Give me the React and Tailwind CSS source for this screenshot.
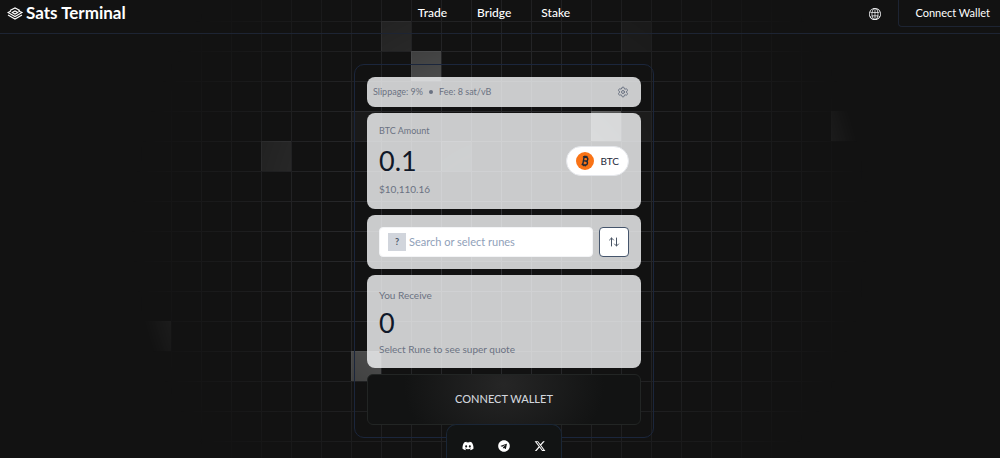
import { Settings, ArrowUpDown } from "lucide-react";
import { FaDiscord, FaTelegram } from "react-icons/fa";
import { FaXTwitter } from "react-icons/fa6";
import { SlGlobe } from "react-icons/sl";

const squares = [
  [-4, -7, 0.24],
  [-3, -6, 0.5],
  [4, -7, 0.13],
  [-5, -4, 0.08],
  [3, -4, 0.6],
  [4, -4, 0.1],
  [11, -4, 0.65],
  [-8, -3, 0.26],
  [-2, -3, 0.14],
  [-1, 0, 0.08],
  [-12, 3, 0.65],
  [-5, 4, 0.55],
];

function Backdrop() {
  return (
    <svg
      aria-hidden="true"
      className="pointer-events-none absolute inset-0 -z-10 h-full w-full [mask-image:radial-gradient(370px_circle_at_center,white,transparent)]"
    >
      <svg x="50%" y="0" overflow="visible">
        <defs>
          <pattern id="grid" width="30" height="30" patternUnits="userSpaceOnUse" x="1" y="21">
            <path d="M0.5 30V0.5H30" fill="none" stroke="#9ca3af" strokeOpacity="0.26" />
          </pattern>
        </defs>
        <rect x="-500" y="0" width="1000" height="2000" fill="url(#grid)" />
        {squares.map(([col, row, opacity]) => (
          <rect
            key={`${col},${row}`}
            x={col * 30 + 1}
            y={row * 30 + 231}
            width="30"
            height="30"
            fill="#d8dada"
            fillOpacity={opacity}
          />
        ))}
      </svg>
    </svg>
  );
}

function LogoMark() {
  return (
    <svg viewBox="0 0 32 26" className="h-[13px] w-4" fill="none" stroke="currentColor" strokeWidth="2.2" aria-hidden="true">
      <path d="M6 7 L16 1.8 L26 7" />
      <path d="M22 7.5 L30 11 L16 19 L2 11 L8 8" />
      <path d="M10.5 11 L16 7.8 L21.5 11 L16 14.2 Z" />
      <path d="M2 16 L16 24 L30 16" />
    </svg>
  );
}

function Header() {
  return (
    <header className="grid h-[34px] grid-cols-[1fr_auto_1fr] items-start border-b border-[#1d2433]">
      <a href="#" className="flex h-[26px] items-center gap-[3px] pl-[7px] text-[17px] font-bold text-white">
        <LogoMark />
        Sats Terminal
      </a>
      <nav className="flex h-[26px] items-center gap-[30px] pr-3 text-xs font-medium text-white">
        <a href="#">Trade</a>
        <a href="#">Bridge</a>
        <a href="#">Stake</a>
      </nav>
      <div className="flex items-center justify-end gap-[17px]">
        <button type="button" aria-label="Language" className="text-gray-100">
          <SlGlobe className="size-3" />
        </button>
        <button
          type="button"
          className="h-[27px] rounded-bl border-b border-l border-[#1d2433] pr-2.5 pl-4 text-[11px] text-white"
        >
          Connect Wallet
        </button>
      </div>
    </header>
  );
}

const panel = "rounded-lg bg-gray-50/80 px-3";

function TradeCard() {
  return (
    <main className="flex w-[300px] flex-col gap-1.5 rounded-[10px] border border-[#1b263c] p-3">
      <section className={`${panel} flex h-[30px] items-center justify-between pl-1.5! text-[9px] text-gray-500`}>
        <p className="flex items-center gap-1.5">
          <span>Slippage: 9%</span>
          <span className="size-1 rounded-full bg-gray-500" />
          <span>Fee: 8 sat/vB</span>
        </p>
        <button type="button" aria-label="Settings">
          <Settings className="size-3" />
        </button>
      </section>

      <section className={`${panel} flex h-24 items-center justify-between`}>
        <div className="flex flex-col">
          <label htmlFor="amount" className="text-[9px] leading-3 text-gray-500">
            BTC Amount
          </label>
          <input
            id="amount"
            defaultValue="0.1"
            className="mt-1.5 h-9 w-32 bg-transparent text-[27px] leading-9 text-gray-900 outline-none"
          />
          <p className="mt-0.5 text-[10px] leading-4 text-gray-500">$10,110.16</p>
        </div>
        <button
          type="button"
          className="flex h-[30px] items-center gap-1.5 rounded-full border border-gray-200 bg-white px-[9px] text-[10px] text-gray-800"
        >
          <svg viewBox="0 0 18 18" className="size-[18px]" aria-hidden="true">
            <circle cx="9" cy="9" r="9" fill="#f97316" />
            <g transform="rotate(10 9 9)" fill="none" stroke="#1f2937" strokeWidth="1.4">
              <path d="M6.2 5.2H9.6a1.8 1.8 0 0 1 0 3.7H7.4M9.8 8.9a2 2 0 0 1 0 4H6.2M7.4 5.2V12.9M8.2 3.6V5.2M10 3.6V5.2M8.2 12.9V14.4M10 12.9V14.4" />
            </g>
          </svg>
          BTC
        </button>
      </section>

      <section className={`${panel} flex h-[54px] items-center gap-1.5`}>
        <label className="flex h-[30px] min-w-0 flex-1 items-center gap-[3px] rounded border border-gray-100 bg-white px-2">
          <span className="flex size-[18px] shrink-0 items-center justify-center bg-gray-300 text-[9px] font-bold text-gray-600">
            ?
          </span>
          <input
            aria-label="Search or select runes"
            placeholder="Search or select runes"
            className="w-full min-w-0 bg-transparent text-[11px] outline-none placeholder:text-slate-400"
          />
        </label>
        <button
          type="button"
          aria-label="Swap direction"
          className="flex size-[30px] items-center justify-center rounded border border-slate-600 bg-white text-gray-600"
        >
          <ArrowUpDown className="size-3" strokeWidth={2} />
        </button>
      </section>

      <section className={`${panel} flex h-[93px] flex-col justify-center`}>
        <h2 className="text-[10px] leading-4 text-gray-500">You Receive</h2>
        <p className="mt-0.5 text-[27px] leading-9 text-gray-900">0</p>
        <p className="text-[10px] leading-4 text-gray-500">Select Rune to see super quote</p>
      </section>

      <button
        type="button"
        className="h-[51px] rounded-md border border-[#222524] bg-[#121313] bg-[radial-gradient(100px_80px_at_50%_20%,#262626,#121313)] text-[11px] font-medium text-gray-300"
      >
        CONNECT WALLET
      </button>
    </main>
  );
}

function Socials() {
  return (
    <footer className="relative z-10 -mt-[14px] flex h-[34px] w-[116px] items-start justify-center gap-6 rounded-t-[10px] border border-b-0 border-[#1a2636] bg-[#121414] pt-[15px] text-white">
      <a href="#" aria-label="Discord">
        <FaDiscord className="size-3" />
      </a>
      <a href="#" aria-label="Telegram">
        <FaTelegram className="size-3" />
      </a>
      <a href="#" aria-label="X">
        <FaXTwitter className="size-3" />
      </a>
    </footer>
  );
}

export default function App() {
  return (
    <div className="relative isolate flex min-h-screen flex-col overflow-hidden border-b-2 border-[#0a0a0a] bg-[#121212] font-['Lato',sans-serif]">
      <Backdrop />
      <Header />
      <div className="flex flex-1 flex-col items-center pt-[30px] pl-2">
        <TradeCard />
        <Socials />
      </div>
    </div>
  );
}
